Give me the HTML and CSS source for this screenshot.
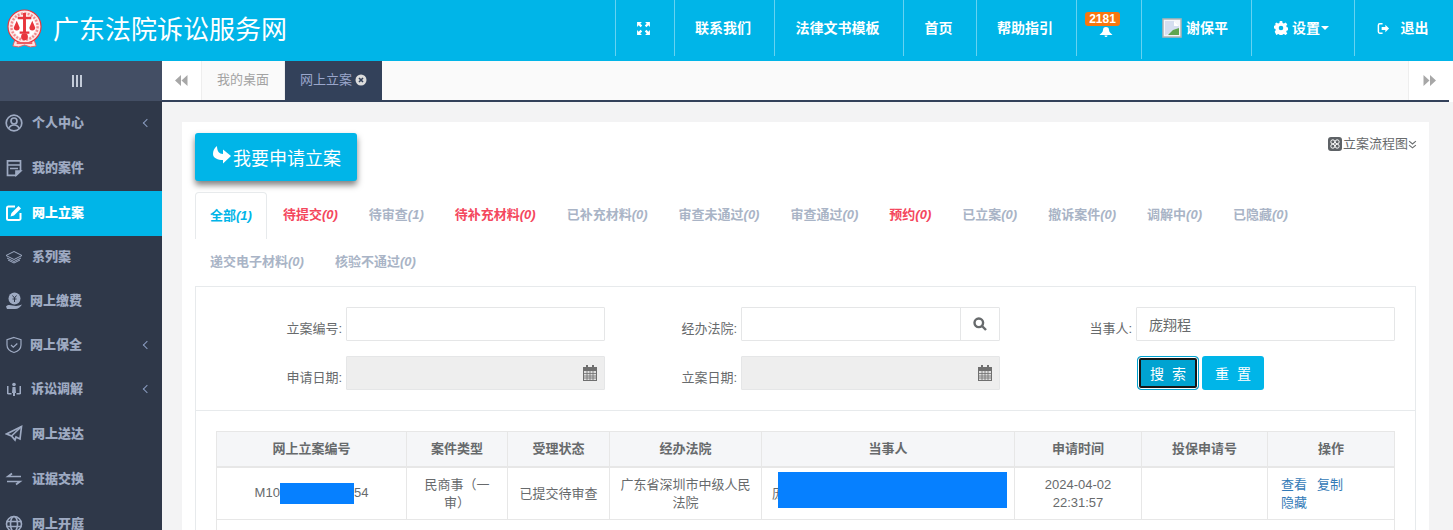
FILE: index.html
```html
<!DOCTYPE html>
<html lang="zh-CN">
<head>
<meta charset="UTF-8">
<title>广东法院诉讼服务网</title>
<link rel="stylesheet" href="styles.css">
</head>
<body>
<header class="topbar">
	<a class="brand">
		<svg class="logo" viewBox="0 0 36 40">
			<path d="M8 32l-2 6 6 1 6-2 6 2 6-1-2-6z" fill="#fbe3e3" stroke="#ee5a5f"/>
			<circle cx="18" cy="18" r="17" fill="#fde8e8" stroke="#e8353c" stroke-width="1.200"/>
			<circle cx="18" cy="18" r="13.500" fill="none" stroke="#f28a8d" stroke-width="2.500" stroke-dasharray="2 1.500"/>
			<circle cx="18" cy="18" r="11.500" fill="#fff"/>
			<path d="M16.500 4h3v4H25v2.500h-5.500V23H23v2.500H13V23h3.500V10.500H11V8h5.500z" fill="#e8353c"/>
			<path d="M7 19l3-7 3 7a3 3 0 0 1-6 0zM23 19l3-7 3 7a3 3 0 0 1-6 0z" fill="#e8353c"/>
			<circle cx="18" cy="28.500" r="3.500" fill="#e8353c"/>
			<path d="M10 35h16" stroke="#ee5a5f" stroke-width="2"/>
		</svg>
		<span class="brand-name">广东法院诉讼服务网</span>
	</a>
	<nav class="topnav">
		<a class="w59">
			<svg class="ico15" viewBox="0 0 14 14" fill="#fff"><path d="M1 1h4.500L4 2.500 5.800 4.300 4.300 5.800 2.500 4 1 5.500zM13 1v4.500L11.500 4 9.700 5.800 8.200 4.300 10 2.500 8.500 1zM1 13V8.500L2.500 10l1.800-1.800 1.500 1.500L4 11.500 5.500 13zM13 13H8.500l1.500-1.500-1.800-1.800 1.500-1.500L11.500 10 13 8.500z"/></svg>
		</a>
		<a class="w100">联系我们</a>
		<a class="w129">法律文书模板</a>
		<a class="w73">首页</a>
		<a class="w100">帮助指引</a>
		<a class="w65 bell-item">
			<span class="badge">2181</span>
			<svg class="bell" viewBox="0 0 14 10" fill="#fff"><path d="M7 0c2 0 3 1 3 3 0 2 2 3.500 3.500 5H.5C2 6.500 4 5 4 3c0-2 1-3 3-3zM5.500 8.500h3a1.500 1.500 0 0 1-3 0z"/></svg>
		</a>
		<a class="w110 long">
			<svg class="avatar" viewBox="0 0 20 20"><path d="M1 1h18v18H1z" fill="#f4f6fa" stroke="#b3b3b3" stroke-width="1.500"/><path d="M3 3h9l5 5v6L3 17z" fill="#d5def0"/><path d="M12 3v5h5z" fill="#fff"/><path d="M6 17l5-5 6-2v7z" fill="#5fa650"/></svg>
			谢保平
		</a>
		<a class="w103">
			<svg class="ico14" viewBox="0 0 14 14" fill="#fff"><path fill-rule="evenodd" d="M5.800 0h2.400l.4 2 1.300.6L11.600 1.500l1.700 1.700-1.100 1.700.6 1.300 2 .4v2.400l-2 .4-.6 1.300 1.100 1.700-1.700 1.700-1.700-1.100-1.300.6-.4 2H5.800l-.4-2-1.300-.6-1.700 1.100L.7 10.800l1.100-1.700-.6-1.300-2-.4V5l2-.4.6-1.300L.7 3.200l1.700-1.700 1.700 1.100 1.300-.6zM7 4.700a2.300 2.300 0 1 0 0 4.600 2.300 2.300 0 0 0 0-4.600z"/></svg>
			设置<i class="caret"></i>
		</a>
		<a class="w99">
			<svg class="ico12" viewBox="0 0 14 14" fill="none" stroke="#fff" stroke-width="1.600"><path d="M6 2H3a1.500 1.500 0 0 0-1.500 1.500v7A1.500 1.500 0 0 0 3 12h3"/><path d="M5 5.500h4V3l4 4-4 4V8.500H5z" fill="#fff" stroke="none"/></svg>
			<span class="exit">退出</span>
		</a>
	</nav>
</header>

<div class="layout">
	<aside class="sidebar">
		<div class="side-toggle"><span></span><span></span><span></span></div>
		<ul class="menu">
			<li class="tall">
				<svg viewBox="0 0 18 18" fill="none" stroke="currentColor" stroke-width="1.700"><circle cx="9" cy="9" r="7.800"/><circle cx="9" cy="7" r="3"/><path d="M3.800 14.500c1-2.500 3-3.500 5.200-3.500s4.200 1 5.200 3.500"/></svg>
				<b>个人中心</b><i class="arrow"></i>
			</li>
			<li class="tall">
				<svg viewBox="0 0 18 18" fill="none" stroke="currentColor" stroke-width="1.700"><path d="M2.500 1.800h13v10l-4.500 4.500H2.500z"/><path d="M2.500 6h13M5 9.500h8"/><path d="M11 16v-4h4.500z" fill="currentColor"/></svg>
				<b>我的案件</b>
			</li>
			<li class="tall on">
				<svg viewBox="0 0 18 18" fill="none" stroke="currentColor" stroke-width="2"><path d="M15.500 9v5.500a1.500 1.500 0 0 1-1.500 1.500H3.500A1.500 1.500 0 0 1 2 14.500V4a1.500 1.500 0 0 1 1.500-1.500H10"/><path d="M5.500 12.500l1-3.500 7-7 2.500 2.500-7 7z" fill="currentColor" stroke="none"/></svg>
				<b>网上立案</b>
			</li>
			<li>
				<svg viewBox="0 0 18 18" fill="none" stroke="currentColor"><path d="M9 3.500l8 4-8 4-8-4zM2 10l7 3.500 7-3.500M3 12l6 3 6-3"/></svg>
				<b>系列案</b>
			</li>
			<li class="nudge">
				<svg viewBox="0 0 18 18" fill="currentColor"><circle cx="9.500" cy="6.500" r="6"/><path d="M1 14.500c2-2 4-1.500 6.500-1l3.500.5c2 0 4-1 6-1.500-1.500 2.500-4 4.500-7 4.500H2z"/><path d="M7.500 3.500l2 2.500 2-2.500M7.500 7h4M9.500 6v4" stroke="#2f3849" fill="none"/></svg>
				<b>网上缴费</b>
			</li>
			<li class="nudge">
				<svg viewBox="0 0 18 18" fill="none" stroke="currentColor" stroke-width="1.200"><path d="M9 1.500l7 2.200V9c0 3.800-3 6.300-7 7.500C5 15.300 2 12.800 2 9V3.700z"/><path d="M6 9l2.300 2.200L12.300 7.500"/></svg>
				<b>网上保全</b><i class="arrow"></i>
			</li>
			<li class="nudge1">
				<svg viewBox="0 0 18 18" fill="currentColor"><circle cx="9" cy="4.500" r="1.800"/><path d="M7.500 7h3l.5 6H10v3H8v-3H7z"/><path d="M2 6h1.500v7h3v1.500h-3L2 14zM16 6h-1.500v7h-3v1.500h3L16 14z"/></svg>
				<b>诉讼调解</b><i class="arrow"></i>
			</li>
			<li class="tall">
				<svg viewBox="0 0 18 18" fill="none" stroke="currentColor" stroke-width="1.700"><path d="M16.500 1.500L1.500 9l5 2 3.500 4 1-3 4 2z"/><path d="M16.500 1.500L6.500 11"/></svg>
				<b>网上送达</b>
			</li>
			<li class="tall">
				<svg viewBox="0 0 18 18" fill="none" stroke="currentColor" stroke-width="1.700"><path d="M16 6.500H3l4-3M2 11.500h13l-4 3"/></svg>
				<b>证据交换</b>
			</li>
			<li class="tall">
				<svg viewBox="0 0 18 18" fill="none" stroke="currentColor" stroke-width="1.600"><circle cx="9" cy="9" r="7.500"/><ellipse cx="9" cy="9" rx="3.500" ry="7.500"/><path d="M1.500 6.500h15M1.500 11.500h15"/></svg>
				<b>网上开庭</b>
			</li>
		</ul>
	</aside>

	<main class="main">
		<div class="tabbar">
			<a class="tab-btn">
				<svg viewBox="0 0 13 11" fill="#a7a7a7"><path d="M6 0v11L0 5.500zM12.500 0v11l-6-5.500z"/></svg>
			</a>
			<a class="page-tab">我的桌面</a>
			<a class="page-tab current">网上立案
				<svg class="tab-close" viewBox="0 0 12 12"><circle cx="6" cy="6" r="5.500" fill="#dcdcdc"/><path d="M4 4l4 4M8 4l-4 4" stroke="#33415a" stroke-width="1.600"/></svg>
			</a>
			<span class="tab-fill"></span>
			<a class="tab-btn right">
				<svg viewBox="0 0 13 11" fill="#a7a7a7"><path d="M.5 0v11l6-5.500zM7 0v11l6-5.500z"/></svg>
			</a>
		</div>

		<div class="content">
			<section class="card">
				<div class="toolbar">
					<button class="btn-apply">
						<svg viewBox="0 0 18 18" fill="#fff"><path d="M18 10L10 3.500V8C6 8 4 5 4 0 1 2 0 5 0 8c0 4 5 6 10 6v3.500z"/></svg>我要申请立案
					</button>
					<a class="flow-link">
						<svg viewBox="0 0 14 14"><rect width="14" height="14" rx="3" fill="#5e6266"/><circle cx="4.800" cy="4.800" r="2" fill="none" stroke="#fff"/><circle cx="9.200" cy="4.800" r="2" fill="none" stroke="#fff"/><circle cx="4.800" cy="9.200" r="2" fill="none" stroke="#fff"/><circle cx="9.200" cy="9.200" r="2" fill="none" stroke="#fff"/></svg>立案流程图<svg class="dbl" viewBox="0 0 8 8" fill="none" stroke="#676a6c"><path d="M1 1l3 2.500L7 1M1 4.500L4 7l3-2.500"/></svg>
					</a>
				</div>

				<ul class="status-tabs">
					<li class="active">全部<em>(1)</em></li>
					<li class="red">待提交<em>(0)</em></li>
					<li>待审查<em>(1)</em></li>
					<li class="red">待补充材料<em>(0)</em></li>
					<li>已补充材料<em>(0)</em></li>
					<li>审查未通过<em>(0)</em></li>
					<li>审查通过<em>(0)</em></li>
					<li class="red">预约<em>(0)</em></li>
					<li>已立案<em>(0)</em></li>
					<li>撤诉案件<em>(0)</em></li>
					<li>调解中<em>(0)</em></li>
					<li>已隐藏<em>(0)</em></li>
					<li>递交电子材料<em>(0)</em></li>
					<li>核验不通过<em>(0)</em></li>
				</ul>

				<form class="filter">
					<label>立案编号:</label>
					<div class="field"></div>
					<label>经办法院:</label>
					<div class="field with-addon">
						<span class="addon">
							<svg viewBox="0 0 14 14" fill="none" stroke="#676a6c" stroke-width="2.400"><circle cx="5.800" cy="5.800" r="4.300"/><path d="M9 9l4 4"/></svg>
						</span>
					</div>
					<label>当事人:</label>
					<div class="field text">庞翔程</div>

					<label>申请日期:</label>
					<div class="field off">
						<svg class="cal" viewBox="0 0 14 16"><path d="M0 2h14v14H0z" fill="#6f6f6f"/><path d="M1 6h12v9H1z" fill="#ddd"/><path d="M1 8.500h12M1 11h12M1 13h12M4 6v9M7 6v9M10 6v9" stroke="#6f6f6f" stroke-width=".8"/><path d="M3 0h2v3.500H3zM9 0h2v3.500H9z" fill="#6f6f6f"/></svg>
					</div>
					<label>立案日期:</label>
					<div class="field off">
						<svg class="cal" viewBox="0 0 14 16"><path d="M0 2h14v14H0z" fill="#6f6f6f"/><path d="M1 6h12v9H1z" fill="#ddd"/><path d="M1 8.500h12M1 11h12M1 13h12M4 6v9M7 6v9M10 6v9" stroke="#6f6f6f" stroke-width=".8"/><path d="M3 0h2v3.500H3zM9 0h2v3.500H9z" fill="#6f6f6f"/></svg>
					</div>
					<span></span>
					<div class="actions">
						<button type="button" class="btn-blue focused">搜 索</button>
						<button type="button" class="btn-blue">重 置</button>
					</div>
				</form>

				<div class="table-panel">
					<table class="cases">
						<colgroup>
							<col class="c1"><col class="c2"><col class="c3"><col class="c4">
							<col class="c5"><col class="c6"><col class="c7"><col class="c8">
						</colgroup>
						<thead>
							<tr>
								<th>网上立案编号</th><th>案件类型</th><th>受理状态</th><th>经办法院</th>
								<th>当事人</th><th>申请时间</th><th>投保申请号</th><th>操作</th>
							</tr>
						</thead>
						<tbody>
							<tr>
								<td>M10<span class="mask-inline"></span>54</td>
								<td>民商事（一审）</td>
								<td>已提交待审查</td>
								<td>广东省深圳市中级人民法院</td>
								<td class="party">庞翔程<span class="mask"></span></td>
								<td>2024-04-02<br>22:31:57</td>
								<td></td>
								<td class="ops"><a>查看</a><a>复制</a><a>隐藏</a></td>
							</tr>
							<tr class="blank"><td colspan="8"></td></tr>
						</tbody>
					</table>
				</div>
			</section>
		</div>
	</main>
</div>
</body>
</html>
```
FILE: styles.css
```css
html, body {margin:0; padding:0; height:530px; overflow:hidden; background:#f3f3f4; color:#676a6c; font:13px/18px "Liberation Sans", "Noto Sans CJK SC", sans-serif;}
ul {list-style:none; margin:0; padding:0;}
a {cursor:pointer;}

.topbar {display:flex; justify-content:space-between; height:61px; background:#00b5e8;}
.brand {display:flex; align-items:flex-start; padding:9px 0 0 7px;}
.logo {width:35px; height:39px;}
.brand-name {margin:-9px 0 0 11px; font-size:26px; color:#fff; line-height:61px;}
.topnav {display:flex; height:56px;}
.topnav a {position:relative; display:flex; align-items:center; justify-content:center; gap:4px; box-sizing:border-box; padding-right:3px; border-left:1px solid rgba(255,255,255,.4); color:#fff; font-size:14px; font-weight:bold;}
.topnav a.long {height:59px; padding-bottom:3px;}
.topnav a.bell-item {padding-right:7px;}
.w59 {width:59px;}
.w65 {width:65px;}
.w73 {width:73px;}
.w99 {width:99px;}
.w100 {width:100px;}
.w103 {width:103px;}
.w110 {width:110px;}
.w129 {width:129px;}
.ico14 {width:14px; height:14px;}
.ico15 {width:15px; height:15px;}
.ico12 {width:13px; height:13px;}
.exit {margin-left:7px;}
.bell {width:14px; height:10px; margin-top:7px;}
.badge {position:absolute; left:8px; top:12px; width:35px; height:14px; background:#f8770f; border-radius:3px; font-size:12px; line-height:14px; text-align:center;}
.avatar {width:20px; height:20px;}
.caret {width:0; height:0; margin-left:-3px; border:4px solid transparent; border-top-color:#fff; border-bottom:0;}

.layout {display:flex; height:469px;}
.sidebar {flex:none; width:162px; background:#2f3849; color:#9eaac2; overflow:hidden;}
.side-toggle {display:flex; justify-content:center; align-items:center; gap:2px; height:40px; padding-right:8px; box-sizing:border-box; background:#434e64;}
.side-toggle span {width:2px; height:12px; background:#c3cbd9;}
.menu li {display:flex; align-items:center; height:44px; padding:0 10px 2px 5px; box-sizing:border-box; font-weight:bold;}
.menu li.tall {height:45px;}
.menu li svg {flex:none; width:18px; height:18px; margin-right:9px;}
.menu li.nudge svg {margin-right:7px;}
.menu li.nudge1 svg {margin-right:8px;}
.menu li.on {background:#00b5e8; color:#fff;}
.menu b {flex:1;}
.arrow {width:5px; height:5px; margin-right:2px; border-left:1px solid #8a9cc0; border-bottom:1px solid #8a9cc0; transform:rotate(45deg);}

.main {flex:1; min-width:0; overflow:hidden;}
.tabbar {display:flex; height:39px; margin-right:4px; background:#fafafa; border-bottom:2px solid #33415a; box-shadow:4px 0 0 #fff;}
.tab-btn {display:flex; align-items:center; justify-content:center; flex:none; width:39px; background:#fff; border-right:1px solid #eee;}
.tab-btn.right {width:40px; border-right:0; border-left:1px solid #eee;}
.tab-btn svg {width:13px; height:11px;}
.page-tab {display:flex; align-items:center; justify-content:center; gap:3px; width:83px; box-sizing:border-box; padding-bottom:2px; border-right:1px solid #eee; color:#a3a3a3;}
.page-tab.current {width:97px; background:#33415a; color:#9aa6cb; border-right:0;}
.tab-close {width:12px; height:12px;}
.tab-fill {flex:1; background:#fafafa;}

.content {padding:20px 24px 0 20px;}
.card {background:#fff; padding:11px 13px 0;}
.toolbar {display:flex; justify-content:space-between; align-items:flex-start; margin-right:-1px;}
.btn-apply {display:flex; align-items:center; width:162px; height:48px; padding:0 0 0 18px; border:0; border-radius:3px; background:#00b5e8; color:#fff; font:18px "Liberation Sans", "Noto Sans CJK SC", sans-serif; box-shadow:0 4px 6px rgba(0,0,0,.5);}
.btn-apply svg {width:18px; height:18px; margin:-5px 2px 0 0;}
.flow-link {display:flex; align-items:center; margin-top:2px; line-height:18px;}
.flow-link svg {width:14px; height:14px; margin-right:1px;}
.flow-link .dbl {width:9px; height:9px; margin:0;}

.status-tabs {display:flex; flex-wrap:wrap; margin-top:11px;}
.status-tabs li {box-sizing:border-box; height:47px; padding:0 15px; margin-right:1px; line-height:46px; font-weight:bold; color:#a9b4c6;}
.status-tabs em {font-style:italic;}
.status-tabs li.red {color:#f4475d;}
.status-tabs li.active {padding:0 14px; border:1px solid #e7eaec; border-bottom:0; border-radius:4px 4px 0 0; background:#fff; color:#00b5e8;}

.filter {display:grid; grid-template-columns:repeat(3, 136px 259px); row-gap:15px; padding:20px 6px 20px 14px; border:1px solid #e7eaec;}
.filter label {padding:13px 4px 0 0; text-align:right; line-height:18px;}
.field {position:relative; box-sizing:border-box; height:34px; border:1px solid #e5e6e7; border-radius:1px; background:#fff;}
.field.text {padding:0 12px; line-height:34px; font-size:14px;}
.field.off {background:#eee;}
.addon {position:absolute; right:0; top:0; bottom:0; display:flex; align-items:center; justify-content:center; width:38px; border-left:1px solid #e5e6e7;}
.addon svg {width:14px; height:14px;}
.cal {position:absolute; right:7px; top:8px; width:14px; height:16px;}
.actions {display:flex; gap:3px; padding-left:1px;}
.btn-blue {width:62px; height:34px; padding:0 0 0 2px; border:0; border-radius:3px; background:#00b5e8; color:#fff; font:14px "Liberation Sans", "Noto Sans CJK SC", sans-serif; letter-spacing:2px;}
.btn-blue.focused {border:1px solid #00a3d1; background:#00a3d1; box-shadow:inset 0 0 0 1px #fff, inset 0 0 0 3px #161616; border-radius:4px;}

.table-panel {height:99px; padding:20px 20px 0; border:1px solid #e7eaec; border-top:0; overflow:hidden;}
.cases {table-layout:fixed; width:1178px; border-collapse:collapse;}
.c1 {width:190px;}
.c2 {width:101px;}
.c3 {width:102px;}
.c4 {width:152px;}
.c5 {width:253px;}
.c6 {width:127px;}
.c7 {width:126px;}
.c8 {width:127px;}
.cases th, .cases td {padding:8px 8px 7px; border:1px solid #e7e7e7; text-align:center; vertical-align:middle;}
.cases th {height:35px; box-sizing:border-box; background:#f5f6f8; border-bottom-width:2px;}
.cases .party {position:relative; padding-left:10px; text-align:left;}
.mask {position:absolute; left:16px; top:4px; width:229px; height:36px; background:#0680ff;}
.mask-inline {display:inline-block; width:74px; height:21px; background:#0680ff; vertical-align:middle;}
.cases .ops {padding:8px 10px 7px 13px; text-align:left;}
.ops a {display:inline-block; margin-right:10px; color:#337ab7;}
.cases .blank td {height:11px; padding:0;}
```
